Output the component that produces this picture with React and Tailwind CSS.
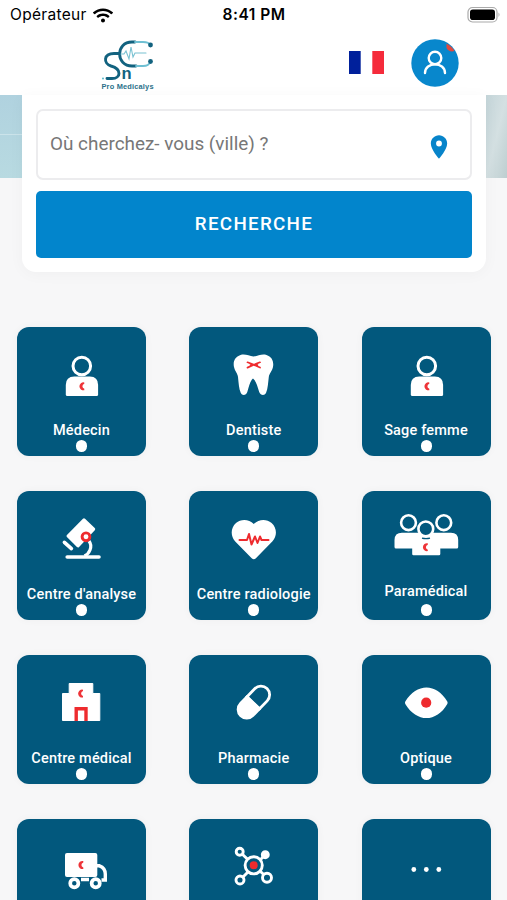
import { FaWifi } from "react-icons/fa";
import { MdLocationOn } from "react-icons/md";

const Crescent = ({ x, y }) => (
  <path
    transform={`translate(${x} ${y})`}
    d="M2.600-3.900A4 4 0 1 0 2.600 3.900L2.600 2.500A2.600 2.600 0 0 1 2.600-2.500Z"
    fill="#ee3438"
  />
);

const Person = () => (
  <>
    <circle cx="64.8" cy="39" r="8.8" fill="none" stroke="white" strokeWidth="3" />
    <path d="M48.800 67.500V58Q48.800 49.500 57.300 49.500H72.800Q81.100 49.500 81.100 58V67.500Q81.100 69 79.600 69H50.300Q48.800 69 48.800 67.500Z" />
    <Crescent x={64.7} y={59.3} />
  </>
);

const Tooth = () => (
  <>
    <path d="M64.500 29.500C60 29 56 26.500 51.500 28C46 29.800 43.800 34.500 45 40C46 44.500 48.500 46 49 50C49.700 56 49.800 61.500 51.800 66C53.200 69 57.200 68.500 58.300 65C60 59.500 61 54 64 51.500C67.200 54 68.500 59.500 70.200 65C71.500 68.500 75.500 69 77 66C79 61.500 79 56 79.800 50C80.400 46 83 44.500 84 40C85 34.500 83 29.800 77.500 28C73 26.500 69 29 64.500 29.500Z" />
    <path
      d="M58.500 35.300Q64.500 37.500 71 40.600M71 35.300Q65.500 37.500 58.500 40.600M61.500 38H68.500"
      fill="none"
      stroke="#ee2b2e"
      strokeWidth="1.700"
      strokeLinecap="round"
    />
  </>
);

const Microscope = () => (
  <>
    <path
      d="M67 28.800L76.700 38.200L61 55L51 45Z"
      stroke="white"
      strokeWidth="3"
      strokeLinejoin="round"
    />
    <path
      d="M47.400 51.300L54.400 57.600M50.200 66H82"
      stroke="white"
      strokeWidth="3.600"
      strokeLinecap="round"
    />
    <path d="M72 50Q75 54 73 59Q71.500 63 67.500 65" fill="none" stroke="white" strokeWidth="3.200" />
    <circle cx="69" cy="45.800" r="3.900" fill="white" stroke="#ee2b2e" strokeWidth="2.900" />
  </>
);

const Heart = () => (
  <>
    <path d="M64.800 33C60 28 52 27.600 47 32C41.500 37 41.400 45 46 50.200L62.700 67.300Q64.800 69.200 66.900 67.300L83.500 50.200C88.300 45 88.100 37 82.600 32C77.600 27.600 69.600 28 64.800 33Z" />
    <path
      d="M50.500 49H58L60 43L62.500 53.500L66 45.500L68.500 52L71 45.500L72.500 49H79.500"
      fill="none"
      stroke="#ee2b2e"
      strokeWidth="2"
      strokeLinecap="round"
      strokeLinejoin="round"
    />
  </>
);

const Team = () => (
  <>
    <path d="M32.500 56V49Q32.500 41.700 40 41.700H89Q96.200 41.700 96.200 49V56Q96.200 57.500 94.700 57.500H78.300V63Q78.300 64.300 77 64.300H51.500Q50.200 64.300 50.200 63V57.500H34Q32.500 57.500 32.500 56Z" />
    <g stroke="white" strokeWidth="2.600" fill="#02587d">
      <circle cx="46.500" cy="31.700" r="7.400" />
      <circle cx="81.800" cy="31.700" r="7.400" />
      <circle cx="63.800" cy="37.900" r="7.400" />
    </g>
    <path d="M60 47.100Q64 48.100 68 47.100" fill="none" stroke="#02587d" strokeWidth="1.400" />
    <Crescent x={63.2} y={56.2} />
  </>
);

const Clinic = () => (
  <>
    <path
      d="M52.200 28.500H75.800V38.500H82.800V65.500H45.500V38.500H52.200Z"
      stroke="white"
      strokeLinejoin="round"
    />
    <Crescent x={63.4} y={38.6} />
    <path d="M59.200 66V53.800H69V66" fill="none" stroke="#ee2b2e" strokeWidth="3.400" />
  </>
);

const Capsule = () => (
  <g transform="rotate(-46 65 47)">
    <path d="M65 37H54.500A10 10 0 0 0 54.500 57H65Z" />
    <path
      d="M64 38.300H75A8.700 8.700 0 0 1 75 55.700H64Z"
      fill="none"
      stroke="white"
      strokeWidth="2.800"
    />
  </g>
);

const Eye = () => (
  <>
    <path d="M43.300 46.500C54.500 27.700 74.500 27.700 85.300 46.500Q86 47.700 85.300 48.900C74.500 67.700 54.500 67.700 43.300 48.900Q42.600 47.700 43.300 46.500Z" />
    <circle cx="64.200" cy="47.700" r="5.100" fill="#ee2b2e" />
  </>
);

const Truck = () => (
  <>
    <rect x="48" y="34" width="32.300" height="24" rx="2" />
    <Crescent x={63.7} y={46} />
    <path
      d="M80 46.800H82.500Q88.300 49 88.300 55V61H84.500M64 60.500H72"
      fill="none"
      stroke="white"
      strokeWidth="3.400"
    />
    <g fill="#02587d" stroke="white" strokeWidth="3.700">
      <circle cx="57.300" cy="64.300" r="4.100" />
      <circle cx="78.700" cy="64.300" r="4.100" />
    </g>
  </>
);

const Molecule = () => (
  <g fill="#02587d" stroke="white" strokeWidth="2.900">
    <path d="M51 33L78 58.700M76.300 35.700L51 61" />
    <circle cx="64.700" cy="46.300" r="8.600" />
    <circle cx="50.700" cy="32.700" r="3.500" />
    <circle cx="76.300" cy="35.700" r="3" fill="white" />
    <circle cx="78" cy="58.700" r="4.500" />
    <circle cx="51" cy="61" r="4" />
    <circle cx="64.700" cy="46.300" r="4" fill="#ee2b2e" stroke="none" />
  </g>
);

const More = () => (
  <>
    <circle cx="51.800" cy="50.500" r="2.400" />
    <circle cx="64.300" cy="50.500" r="2.400" />
    <circle cx="76.800" cy="50.500" r="2.400" />
  </>
);

const categories = [
  { label: "Médecin", Icon: Person },
  { label: "Dentiste", Icon: Tooth },
  { label: "Sage femme", Icon: Person },
  { label: "Centre d'analyse", Icon: Microscope },
  { label: "Centre radiologie", Icon: Heart },
  { label: "Paramédical", Icon: Team, raised: true },
  { label: "Centre médical", Icon: Clinic },
  { label: "Pharmacie", Icon: Capsule },
  { label: "Optique", Icon: Eye },
  { Icon: Truck },
  { Icon: Molecule },
  { Icon: More },
];

const CategoryCard = ({ label, Icon, raised }) => (
  <div className="flex h-[129px] flex-col items-center overflow-hidden rounded-[12px] bg-[#02587d] shadow-[0_0_8px_rgba(0,0,0,0.04)]">
    <svg viewBox="0 0 129 90" className="h-[90px] w-[129px] shrink-0 fill-white">
      <Icon />
    </svg>
    {label && (
      <>
        <span
          className={`h-[20px] shrink-0 whitespace-nowrap text-[14.500px] font-medium leading-[20px] tracking-[0.180px] text-white ${
            raised ? "mt-px mb-[2px]" : "mt-[4px] -mb-px"
          }`}
        >
          {label}
        </span>
        <span className="h-[12px] w-[11px] shrink-0 rounded-full bg-white" />
      </>
    )}
  </div>
);

const StatusBar = () => (
  <div className="grid h-[30px] grid-cols-3 items-center pl-[10px] pr-[6px] font-[Inter,sans-serif] text-black">
    <div className="flex items-center gap-[6px] text-[15.500px] tracking-[0.300px]">
      <span>Opérateur</span>
      <FaWifi className="h-[17px] w-[20px]" />
    </div>
    <span className="pr-[3px] text-center text-[15.500px] font-semibold tracking-[0.500px]">8:41 PM</span>
    <div className="flex items-center justify-end">
      <svg viewBox="0 0 34 18" className="h-[18px] w-[34px]">
        <rect x="1" y="1.500" width="29" height="14.500" rx="4.500" fill="white" stroke="#aaa" strokeWidth="1.200" />
        <rect x="3" y="3.500" width="25" height="10.500" rx="2.800" />
        <path d="M31.500 6.500Q33.500 8.700 31.500 11Z" fill="#aaa" />
      </svg>
    </div>
  </div>
);

const Logo = () => (
  <svg viewBox="0 0 56 54" className="mt-[6px] h-[54px] w-[56px] overflow-visible">
    <g fill="none" strokeLinecap="round">
      <path d="M35 3H32C15.500 3 15.500 27 32 27H36" stroke="#12627f" strokeWidth="2.800" />
      <path d="M35 3H43Q49 3 50 6M36 27H43Q49 27 50 23" stroke="#6fc0d3" strokeWidth="1.800" />
      <path
        d="M19 14.500H14C3.500 14.500 3 24.500 11 27C22 30 21 39.500 12 39.500H7"
        stroke="#12627f"
        strokeWidth="2.900"
      />
      <path d="M21 15H24L26 12L29 20L31 8L33 18L35 14H46" stroke="#79c2d2" strokeWidth="1.100" />
    </g>
    <circle cx="50.500" cy="6" r="2.400" fill="#12627f" />
    <circle cx="50.500" cy="22.500" r="2.400" fill="#12627f" />
    <circle cx="3" cy="39.500" r="1" fill="#55b8c6" />
    <text x="21.500" y="39.500" fontFamily="Liberation Sans, sans-serif" fontWeight="700" fontSize="16.500" fill="#12627f">
      n
    </text>
    <text
      x="1.500"
      y="50.200"
      fontFamily="Liberation Sans, sans-serif"
      fontWeight="700"
      fontSize="7.400"
      textLength="52"
      fill="#2b718a"
    >
      Pro Medicalys
    </text>
  </svg>
);

const Header = () => (
  <header className="relative h-[95px] bg-white">
    <StatusBar />
    <div className="flex h-[65px] items-center pl-[100px] pr-[48px]">
      <Logo />
      <svg viewBox="0 0 35 23" className="ml-auto h-[23px] w-[35px]">
        <rect width="11.700" height="23" fill="#00209b" />
        <rect x="23.300" width="11.700" height="23" fill="#f52b3b" />
      </svg>
      <svg viewBox="0 0 48 48" className="ml-[27px] h-[48px] w-[48px]">
        <circle cx="24" cy="24" r="23.700" fill="#0887cc" />
        <path d="M35.500 4.500Q41.500 8 43.500 12Q38 13.500 35.500 9Z" fill="#df4940" />
        <g fill="none" stroke="white" strokeWidth="2.400" strokeLinecap="round">
          <circle cx="24" cy="19" r="6.300" />
          <path d="M14 34C14 22.500 34 22.500 34 34" />
        </g>
      </svg>
    </div>
  </header>
);

const SearchCard = () => (
  <section className="relative ml-[22px] mr-[21px] h-[177px] rounded-b-[14px] bg-white px-[14px] pt-[14px] shadow-[0_2px_16px_rgba(0,0,0,0.035)]">
    <div className="flex h-[71px] items-center justify-between rounded-[7px] border-2 border-[#ececee] pl-[12px] pr-[17px]">
      <span className="text-[18.900px] text-[#777]">Où cherchez- vous (ville) ?</span>
      <MdLocationOn className="mt-[5px] h-[28px] w-[28px] text-[#0784ca]" />
    </div>
    <button className="mt-[11px] flex h-[67px] w-full items-center justify-center rounded-[5px] bg-[#0285cc] pb-px text-[18.800px] font-medium tracking-[1.300px] text-white">
      RECHERCHE
    </button>
  </section>
);

export default function App() {
  return (
    <div className="h-[900px] w-[507px] overflow-hidden bg-[#f7f7f8] font-[Roboto,sans-serif]">
      <Header />
      {/* banner strip showing on both sides of the search card */}
      <div className="-mb-[83px] flex h-[83px] justify-between">
        <div className="w-[60px] bg-linear-to-b from-[#b0d2df] to-[#b8dae1]">
          <div className="mt-[39px] h-px bg-[#cbe3ea]" />
        </div>
        <div className="w-[21px] bg-linear-to-br from-[#c4d5d9] via-[#d4e0e2] to-[#bdced0]" />
      </div>
      <SearchCard />
      <main className="mt-[55px] grid grid-cols-[129px_129px_129px] justify-between gap-y-[35px] pl-[17px] pr-[16.500px]">
        {categories.map((category, i) => (
          <CategoryCard key={i} {...category} />
        ))}
      </main>
    </div>
  );
}
